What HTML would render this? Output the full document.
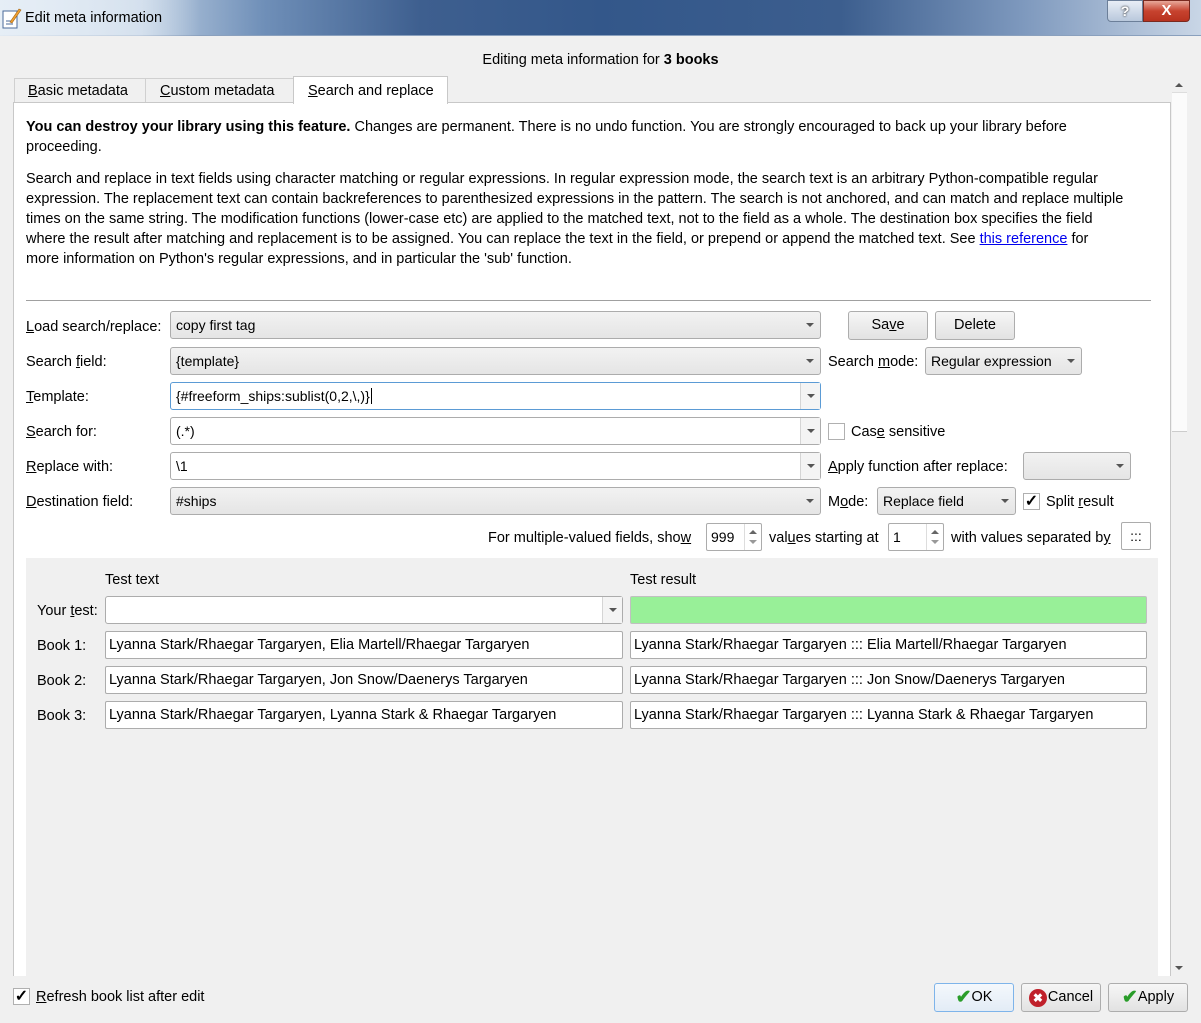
<!DOCTYPE html>
<html><head><meta charset="utf-8"><style>
*{box-sizing:border-box;margin:0;padding:0}
body{width:1201px;height:1023px;background:#f0f0f0;font-family:"Liberation Sans",sans-serif;font-size:14px;color:#000;position:relative;overflow:hidden}
.a{position:absolute;white-space:nowrap}
.lbl{position:absolute;white-space:nowrap;line-height:18px}
u{text-decoration:underline}
.cb{position:absolute;height:28px;border:1px solid #acacac;border-radius:3px;background:linear-gradient(#f2f2f2,#e5e5e5);line-height:26px;padding-left:5px}
.cb.w{background:#fff}
.cb .ar{position:absolute;right:0;top:0;width:20px;height:26px}
.cb.w .ar{border-left:1px solid #d5d5d5;background:#f4f4f4}
.cb .ar:after{content:"";position:absolute;left:6px;top:11px;border-left:4px solid transparent;border-right:4px solid transparent;border-top:4px solid #555}
.ed{position:absolute;height:28px;border:1px solid #acacac;border-radius:2px;background:#fff;line-height:26px;padding-left:3px}
.btn{position:absolute;height:29px;border:1px solid #adadad;border-radius:3px;background:linear-gradient(#f6f6f6,#e2e2e2);text-align:center;line-height:27px;display:flex;align-items:center;justify-content:center;font-size:14.5px}
.chk{position:absolute;width:17px;height:17px;border:1px solid #b0b0b0;background:#fff;font-size:16px;line-height:15px;text-align:center;font-weight:bold}
.sp{position:absolute;height:28px;border:1px solid #acacac;border-radius:2px;background:#fff;line-height:26px;padding-left:4px}
.sp .s{position:absolute;right:0;top:0;width:17px;height:26px;border-left:1px solid #ddd}
.sp .s:before{content:"";position:absolute;left:4px;top:6px;border-left:4px solid transparent;border-right:4px solid transparent;border-bottom:4px solid #666}
.sp .s:after{content:"";position:absolute;left:4px;top:16px;border-left:4px solid transparent;border-right:4px solid transparent;border-top:4px solid #999}
</style></head><body>
<div class="a" style="left:0;top:0;width:1201px;height:36px;background:linear-gradient(to right,#dce6f1 0%,#b9cbe0 12%,#6f8fb8 22%,#3e5f8f 35%,#33578a 50%,#3c5e8e 70%,#7d98bd 85%,#c9d6e6 100%);border-bottom:1px solid #8aa0bd"></div>
<div class="a" style="left:0;top:0;width:200px;height:36px;background:linear-gradient(to right,rgba(230,238,246,.95),rgba(230,238,246,.6) 70%,rgba(230,238,246,0))"></div>
<svg class="a" style="left:2px;top:7px" width="20" height="22" viewBox="0 0 20 22"><rect x="1" y="4" width="14" height="17" fill="#fff" stroke="#4a6a9a"/><path d="M4 17h7M4 14h5" stroke="#4a6a9a"/><path d="M8 15l9-13 2 1-9 13z" fill="#f0a030" stroke="#a06010" stroke-width=".6"/></svg>
<div class="a" style="left:25px;top:10px;font-size:14.5px;color:#000">Edit meta information</div>
<div class="a" style="left:1107px;top:0;width:36px;height:22px;border:1px solid #6c7f99;border-radius:0 0 0 4px;background:linear-gradient(#e8eef6,#b9c8dc);text-align:center;font-size:14px;line-height:20px;color:#fff;font-weight:bold;text-shadow:0 0 2px #000">?</div>
<div class="a" style="left:1143px;top:0;width:47px;height:22px;border:1px solid #7a2a20;border-radius:0 0 4px 0;background:linear-gradient(#e8a89a,#c7432f 50%,#b8321f);text-align:center;font-size:15px;line-height:20px;color:#fff;font-weight:bold">X</div>

<div class="a" style="left:0;top:52px;width:1201px;text-align:center;font-size:14.5px">Editing meta information for <b>3 books</b></div>

<div class="a" style="left:14px;top:78px;width:132px;height:25px;border:1px solid #d0d0d0;border-bottom:none;background:#f0f0f0;line-height:25px;padding-left:13px;font-size:14.5px"><u>B</u>asic metadata</div>
<div class="a" style="left:145px;top:78px;width:149px;height:25px;border:1px solid #d0d0d0;border-bottom:none;background:#f0f0f0;line-height:25px;padding-left:14px;font-size:14.5px"><u>C</u>ustom metadata</div>
<div class="a" style="left:293px;top:76px;width:155px;height:28px;border:1px solid #c8c8c8;border-bottom:none;background:#fff;line-height:28px;padding-left:14px;font-size:14.5px;z-index:2"><u>S</u>earch and replace</div>

<div class="a" style="left:13px;top:102px;width:1158px;height:874px;background:#fff;border:1px solid #c8c8c8;border-bottom:none"></div>
<div class="a" style="left:1171px;top:76px;width:17px;height:900px;background:#f0f0f0"></div>
<div class="a" style="left:1172px;top:92px;width:15px;height:340px;background:#fbfbfb;border-top:1px solid #ddd;border-bottom:1px solid #ccc"></div>
<div class="a" style="left:1175px;top:83px;border-left:4px solid transparent;border-right:4px solid transparent;border-bottom:4px solid #555"></div>
<div class="a" style="left:1175px;top:966px;border-left:4px solid transparent;border-right:4px solid transparent;border-top:4px solid #555"></div>

<div class="a" style="left:26px;top:117px;line-height:20px;font-size:14.5px"><b>You can destroy your library using this feature.</b> Changes are permanent. There is no undo function. You are strongly encouraged to back up your library before<br>proceeding.</div>
<div class="a" style="left:26px;top:169px;line-height:20px;font-size:14.5px">Search and replace in text fields using character matching or regular expressions. In regular expression mode, the search text is an arbitrary Python-compatible regular<br>expression. The replacement text can contain backreferences to parenthesized expressions in the pattern. The search is not anchored, and can match and replace multiple<br>times on the same string. The modification functions (lower-case etc) are applied to the matched text, not to the field as a whole. The destination box specifies the field<br>where the result after matching and replacement is to be assigned. You can replace the text in the field, or prepend or append the matched text. See <span style="color:#0000ee;text-decoration:underline">this reference</span> for<br>more information on Python's regular expressions, and in particular the 'sub' function.</div>
<div class="a" style="left:26px;top:300px;width:1125px;height:1px;background:#a0a0a0"></div>

<div class="lbl" style="left:26px;top:318px;font-size:14.5px"><u>L</u>oad search/replace:</div>
<div class="cb" style="left:170px;top:311px;width:651px">copy first tag<div class="ar"></div></div>
<div class="btn" style="left:848px;top:311px;width:80px">Sa<u>v</u>e</div>
<div class="btn" style="left:935px;top:311px;width:80px">Delete</div>

<div class="lbl" style="left:26px;top:353px;font-size:14.5px">Search <u>f</u>ield:</div>
<div class="cb" style="left:170px;top:347px;width:651px">{template}<div class="ar"></div></div>
<div class="lbl" style="left:828px;top:353px;font-size:14.5px">Search <u>m</u>ode:</div>
<div class="cb" style="left:925px;top:347px;width:157px">Regular expression<div class="ar"></div></div>

<div class="lbl" style="left:26px;top:388px;font-size:14.5px"><u>T</u>emplate:</div>
<div class="cb w" style="left:170px;top:382px;width:651px;border-color:#5b9bd5">{#freeform_ships:sublist(0,2,\,)}<span style="border-left:1px solid #000;margin-left:1px"></span><div class="ar"></div></div>

<div class="lbl" style="left:26px;top:423px;font-size:14.5px"><u>S</u>earch for:</div>
<div class="cb w" style="left:170px;top:417px;width:651px">(.*)<div class="ar"></div></div>
<div class="chk" style="left:828px;top:423px"></div>
<div class="lbl" style="left:851px;top:423px;font-size:14.5px">Cas<u>e</u> sensitive</div>

<div class="lbl" style="left:26px;top:458px;font-size:14.5px"><u>R</u>eplace with:</div>
<div class="cb w" style="left:170px;top:452px;width:651px">\1<div class="ar"></div></div>
<div class="lbl" style="left:828px;top:458px;font-size:14.5px"><u>A</u>pply function after replace:</div>
<div class="cb" style="left:1023px;top:452px;width:108px"><div class="ar"></div></div>

<div class="lbl" style="left:26px;top:493px;font-size:14.5px"><u>D</u>estination field:</div>
<div class="cb" style="left:170px;top:487px;width:651px">#ships<div class="ar"></div></div>
<div class="lbl" style="left:828px;top:493px;font-size:14.5px">M<u>o</u>de:</div>
<div class="cb" style="left:877px;top:487px;width:139px">Replace field<div class="ar"></div></div>
<div class="chk" style="left:1023px;top:493px">✓</div>
<div class="lbl" style="left:1046px;top:493px;font-size:14.5px">Split <u>r</u>esult</div>

<div class="lbl" style="left:488px;top:529px;font-size:14.5px">For multiple-valued fields, sho<u>w</u></div>
<div class="sp" style="left:706px;top:523px;width:56px">999<div class="s"></div></div>
<div class="lbl" style="left:769px;top:529px;font-size:14.5px">val<u>u</u>es starting at</div>
<div class="sp" style="left:888px;top:523px;width:56px">1<div class="s"></div></div>
<div class="lbl" style="left:951px;top:529px;font-size:14.5px">with values separated b<u>y</u></div>
<div class="ed" style="left:1121px;top:522px;width:30px;text-align:center;padding:0">:::</div>

<div class="a" style="left:26px;top:558px;width:1132px;height:418px;background:#f0f0f0"></div>
<div class="lbl" style="left:105px;top:571px;font-size:14.5px">Test text</div>
<div class="lbl" style="left:630px;top:571px;font-size:14.5px">Test result</div>
<div class="lbl" style="left:37px;top:602px;font-size:14.5px">Your <u>t</u>est:</div>
<div class="cb w" style="left:105px;top:596px;width:518px"><div class="ar"></div></div>
<div class="a" style="left:630px;top:596px;width:517px;height:28px;background:#98f098;border:1px solid #c0c0c0;border-radius:2px"></div>

<div class="lbl" style="left:37px;top:637px;font-size:14.5px">Book 1:</div>
<div class="ed" style="left:105px;top:631px;width:518px;font-size:14.5px">Lyanna Stark/Rhaegar Targaryen, Elia Martell/Rhaegar Targaryen</div>
<div class="ed" style="left:630px;top:631px;width:517px;font-size:14.5px">Lyanna Stark/Rhaegar Targaryen ::: Elia Martell/Rhaegar Targaryen</div>
<div class="lbl" style="left:37px;top:672px;font-size:14.5px">Book 2:</div>
<div class="ed" style="left:105px;top:666px;width:518px;font-size:14.5px">Lyanna Stark/Rhaegar Targaryen, Jon Snow/Daenerys Targaryen</div>
<div class="ed" style="left:630px;top:666px;width:517px;font-size:14.5px">Lyanna Stark/Rhaegar Targaryen ::: Jon Snow/Daenerys Targaryen</div>
<div class="lbl" style="left:37px;top:707px;font-size:14.5px">Book 3:</div>
<div class="ed" style="left:105px;top:701px;width:518px;font-size:14.5px">Lyanna Stark/Rhaegar Targaryen, Lyanna Stark &amp; Rhaegar Targaryen</div>
<div class="ed" style="left:630px;top:701px;width:517px;font-size:14.5px">Lyanna Stark/Rhaegar Targaryen ::: Lyanna Stark &amp; Rhaegar Targaryen</div>

<div class="chk" style="left:13px;top:988px">✓</div>
<div class="lbl" style="left:36px;top:988px;font-size:14.5px"><u>R</u>efresh book list after edit</div>
<div class="btn" style="left:934px;top:983px;width:80px;border-color:#7eb4ea;background:linear-gradient(#f4f8fc,#e3ecf6)"><span style="color:#2a9d2a;font-weight:bold;font-size:19px;line-height:20px">✔</span>OK</div>
<div class="btn" style="left:1021px;top:983px;width:80px"><span style="display:inline-block;width:18px;height:18px;border-radius:50%;background:#c0202a;color:#fff;font-size:12px;line-height:18px;text-align:center;font-weight:bold;margin-right:1px">✖</span>Cancel</div>
<div class="btn" style="left:1108px;top:983px;width:80px"><span style="color:#2a9d2a;font-weight:bold;font-size:19px;line-height:20px">✔</span>Apply</div>
</body></html>
